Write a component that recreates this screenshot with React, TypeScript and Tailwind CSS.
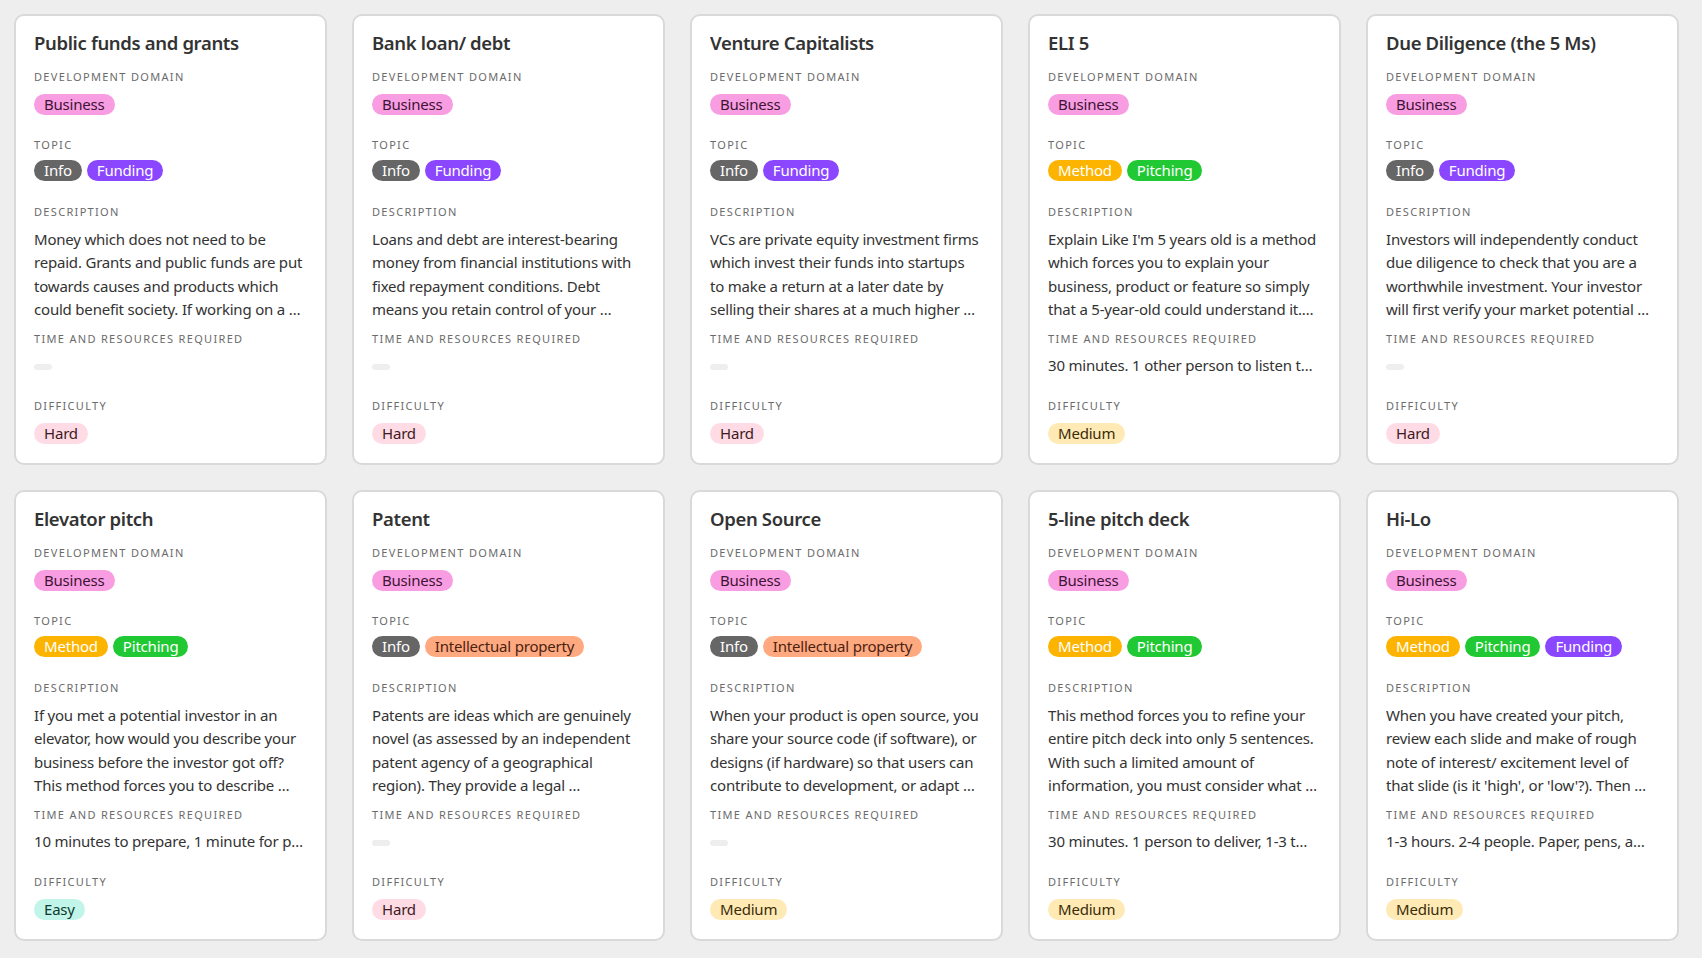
import React from "react";

type Tag = { label: string; cls: string };

const T = {
  business: { label: "Business", cls: "bg-[#f99de2] text-[#3d1434]" },
  info: { label: "Info", cls: "bg-[#666666] text-white" },
  funding: { label: "Funding", cls: "bg-[#8b46ff] text-white" },
  method: { label: "Method", cls: "bg-[#fcb400] text-white" },
  pitching: { label: "Pitching", cls: "bg-[#20c933] text-white" },
  ip: { label: "Intellectual property", cls: "bg-[#ffa981] text-[#4a2210]" },
  hard: { label: "Hard", cls: "bg-[#ffdce5] text-[#3d1a23]" },
  medium: { label: "Medium", cls: "bg-[#ffeab6] text-[#3b2c08]" },
  easy: { label: "Easy", cls: "bg-[#c2f5e9] text-[#0f3a30]" },
};

type Card = {
  title: string;
  topics: Tag[];
  desc: string[];
  time?: string;
  difficulty: Tag;
};

const cards: Card[] = [
  {
    title: "Public funds and grants",
    topics: [T.info, T.funding],
    desc: [
      "Money which does not need to be",
      "repaid. Grants and public funds are put",
      "towards causes and products which",
      "could benefit society. If working on a …",
    ],
    difficulty: T.hard,
  },
  {
    title: "Bank loan/ debt",
    topics: [T.info, T.funding],
    desc: [
      "Loans and debt are interest-bearing",
      "money from financial institutions with",
      "fixed repayment conditions. Debt",
      "means you retain control of your …",
    ],
    difficulty: T.hard,
  },
  {
    title: "Venture Capitalists",
    topics: [T.info, T.funding],
    desc: [
      "VCs are private equity investment firms",
      "which invest their funds into startups",
      "to make a return at a later date by",
      "selling their shares at a much higher …",
    ],
    difficulty: T.hard,
  },
  {
    title: "ELI 5",
    topics: [T.method, T.pitching],
    desc: [
      "Explain Like I'm 5 years old is a method",
      "which forces you to explain your",
      "business, product or feature so simply",
      "that a 5-year-old could understand it.…",
    ],
    time: "30 minutes. 1 other person to listen t…",
    difficulty: T.medium,
  },
  {
    title: "Due Diligence (the 5 Ms)",
    topics: [T.info, T.funding],
    desc: [
      "Investors will independently conduct",
      "due diligence to check that you are a",
      "worthwhile investment. Your investor",
      "will first verify your market potential …",
    ],
    difficulty: T.hard,
  },
  {
    title: "Elevator pitch",
    topics: [T.method, T.pitching],
    desc: [
      "If you met a potential investor in an",
      "elevator, how would you describe your",
      "business before the investor got off?",
      "This method forces you to describe …",
    ],
    time: "10 minutes to prepare, 1 minute for p…",
    difficulty: T.easy,
  },
  {
    title: "Patent",
    topics: [T.info, T.ip],
    desc: [
      "Patents are ideas which are genuinely",
      "novel (as assessed by an independent",
      "patent agency of a geographical",
      "region). They provide a legal …",
    ],
    difficulty: T.hard,
  },
  {
    title: "Open Source",
    topics: [T.info, T.ip],
    desc: [
      "When your product is open source, you",
      "share your source code (if software), or",
      "designs (if hardware) so that users can",
      "contribute to development, or adapt …",
    ],
    difficulty: T.medium,
  },
  {
    title: "5-line pitch deck",
    topics: [T.method, T.pitching],
    desc: [
      "This method forces you to refine your",
      "entire pitch deck into only 5 sentences.",
      "With such a limited amount of",
      "information, you must consider what …",
    ],
    time: "30 minutes. 1 person to deliver, 1-3 t…",
    difficulty: T.medium,
  },
  {
    title: "Hi-Lo",
    topics: [T.method, T.pitching, T.funding],
    desc: [
      "When you have created your pitch,",
      "review each slide and make of rough",
      "note of interest/ excitement level of",
      "that slide (is it 'high', or 'low'?). Then …",
    ],
    time: "1-3 hours. 2-4 people. Paper, pens, a…",
    difficulty: T.medium,
  },
];

function Pill({ tag }: { tag: Tag }) {
  return (
    <span
      className={`inline-flex h-[21px] items-center rounded-full px-[10px] text-[15px] leading-[21px] tracking-[-0.2px] whitespace-nowrap ${tag.cls}`}
    >
      {tag.label}
    </span>
  );
}

function Label({ children, className = "" }: { children: React.ReactNode; className?: string }) {
  return (
    <div
      className={`h-[16px] text-[11px] leading-[16px] uppercase tracking-[0.12em] text-[#6b6b6b] ${className}`}
    >
      {children}
    </div>
  );
}

function CardView({ card }: { card: Card }) {
  return (
    <div className="h-[451px] w-[313px] overflow-hidden rounded-[10px] border-2 border-[#d9d9d9] bg-white px-[18px] pt-[13px]">
      <div className="h-[28px] truncate text-[18.5px] font-semibold leading-[28px] tracking-[-0.35px] text-[#333333]">
        {card.title}
      </div>
      <Label className="mt-[12px]">Development domain</Label>
      <div className="mt-[9px] flex h-[21px] gap-[5px]">
        <Pill tag={T.business} />
      </div>
      <Label className="mt-[22px]">Topic</Label>
      <div className="mt-[7px] flex h-[22px] gap-[5px]">
        {card.topics.map((t) => (
          <Pill key={t.label} tag={t} />
        ))}
      </div>
      <Label className="mt-[22px]">Description</Label>
      <div className="mt-[8px] text-[15px] leading-[23.4px] tracking-[-0.2px] text-[#333333]">
        {card.desc.map((l, i) => (
          <div key={i} className="whitespace-nowrap">
            {l}
          </div>
        ))}
      </div>
      <Label className="mt-[9px]">Time and resources required</Label>
      <div className="mt-[7px] flex h-[23.4px] items-center text-[15px] leading-[23.4px] tracking-[-0.2px] text-[#333333]">
        {card.time ? (
          <div className="whitespace-nowrap">{card.time}</div>
        ) : (
          <div className="mt-[4px] h-[6px] w-[18px] rounded-full bg-[#eeeeee]" />
        )}
      </div>
      <Label className="mt-[21px]">Difficulty</Label>
      <div className="mt-[9px] flex h-[21px]">
        <Pill tag={card.difficulty} />
      </div>
    </div>
  );
}

export default function App() {
  return (
    <div
      className="min-h-screen w-full bg-[#eeeeee] pl-[14px] pt-[14px] pb-[17px]"
      style={{ fontFamily: '"Noto Sans", "Open Sans", sans-serif' }}
    >
      <div className="grid grid-cols-[repeat(5,313px)] gap-x-[25px] gap-y-[25px]">
        {cards.map((c) => (
          <CardView key={c.title} card={c} />
        ))}
      </div>
    </div>
  );
}
